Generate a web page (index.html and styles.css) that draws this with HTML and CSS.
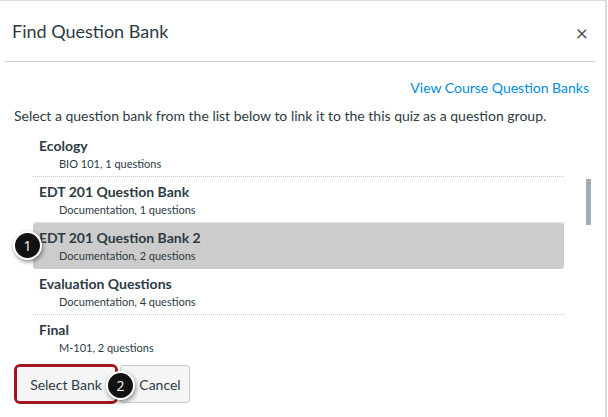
FILE: index.html
```html
<!DOCTYPE html>
<html>
<head>
<meta charset="utf-8">
<link rel="stylesheet" href="styles.css">
</head>
<body>
<div class="dialog">
  <div class="header">
    <h1 class="title">Find Question Bank</h1>
    <span class="close">&#215;</span>
  </div>
  <div class="divider"></div>
  <div class="content">
    <div class="link-row"><a class="link" href="#">View Course Question Banks</a></div>
    <p class="intro">Select a question bank from the list below to link it to the this quiz as a question group.</p>
    <div class="list-wrap">
      <ul class="list">
        <li class="item"><div class="name">Ecology</div><div class="meta">BIO 101, 1 questions</div></li>
        <li class="item"><div class="name">EDT 201 Question Bank</div><div class="meta">Documentation, 1 questions</div></li>
        <li class="item selected"><div class="name">EDT 201 Question Bank 2</div><div class="meta">Documentation, 2 questions</div><span class="badge badge-1">1</span></li>
        <li class="item"><div class="name">Evaluation Questions</div><div class="meta">Documentation, 4 questions</div></li>
        <li class="item last"><div class="name">Final</div><div class="meta">M-101, 2 questions</div></li>
      </ul>
      <div class="track"><div class="thumb"></div></div>
    </div>
    <div class="actions">
      <div class="annot"><button class="btn btn-select">Select Bank</button></div>
      <button class="btn btn-cancel">Cancel</button>
      <span class="badge badge-2">2</span>
    </div>
  </div>
</div>
</body>
</html>
```
FILE: styles.css
```css
html, body {
  margin: 0;
  padding: 0;
  background: #fff;
}
body {
  font-family: Lato, "Open Sans", sans-serif;
  color: #2d3b45;
}
.dialog {
  width: 605px;
  height: 416px;
  border-top: 1px solid #dcdcdc;
  border-right: 2px solid #dcdcdc;
  position: relative;
}
.header {
  height: 60px;
  display: flex;
  align-items: center;
  justify-content: space-between;
  padding: 0 17px 0 12px;
}
.title {
  margin: 0;
  font-size: 18px;
  font-weight: 400;
  color: #2d3b45;
}
.close {
  font-size: 21px;
  color: #555;
  line-height: 1;
  margin-top: 2px;
}
.divider {
  margin: 0 10px 0 5px;
  border-top: 1px solid #c7cdd1;
}
.content {
  padding: 0 14px;
  position: relative;
}
.link-row {
  display: flex;
  justify-content: flex-end;
  padding-top: 17px;
  padding-right: 2px;
}
.link {
  color: #008ee2;
  text-decoration: none;
  font-size: 14px;
  line-height: 18px;
}
.intro {
  margin: 10px 0 0;
  font-size: 14px;
  line-height: 18px;
}
.list-wrap {
  display: flex;
  margin-top: 6px;
  margin-left: 19px;
}
.list {
  list-style: none;
  margin: 0;
  padding: 0;
  width: 532px;
}
.item {
  height: 45px;
  border-bottom: 1px dotted #c7cdd1;
  padding-left: 6px;
  box-sizing: content-box;
  position: relative;
}
.item.last {
  border-bottom: none;
}
.item.selected {
  background: #cccccc;
  border-radius: 3px;
}
.name {
  font-weight: 700;
  font-size: 14px;
  line-height: 18px;
  padding-top: 6px;
}
.meta {
  font-size: 11px;
  line-height: 14px;
  padding-left: 20px;
  margin-top: 2px;
}
.track {
  width: 5px;
  margin-left: 22px;
  padding-top: 48px;
}
.thumb {
  width: 5px;
  height: 46px;
  background: #a5adb4;
}
.actions {
  display: flex;
  align-items: center;
  margin-top: 4px;
  position: relative;
}
.annot {
  border: 3px solid #a0151e;
  border-radius: 6px;
  width: 98px;
  height: 34px;
  display: flex;
}
.btn {
  font-family: Lato, "Open Sans", sans-serif;
  font-size: 14px;
  color: #2d3b45;
  background: #f5f5f5;
  border: 1px solid #c7cdd1;
  border-radius: 3px;
  padding: 0;
}
.btn-select {
  width: 100%;
  border: none;
  border-radius: 3px;
  text-align: center;
}
.btn-cancel {
  margin-left: 2px;
  width: 70px;
  height: 38px;
  padding-left: 10px;
}
.badge {
  position: absolute;
  width: 25px;
  height: 25px;
  border-radius: 50%;
  background: #111;
  color: #fff;
  border: 2px solid #fff;
  box-shadow: 1px 2px 4px rgba(0, 0, 0, 0.45);
  font-size: 14px;
  display: flex;
  align-items: center;
  justify-content: center;
  font-family: "Open Sans", Lato, sans-serif;
}
.badge-1 {
  left: -20px;
  top: 8px;
}
.badge-2 {
  left: 92px;
  top: 7px;
}
```
